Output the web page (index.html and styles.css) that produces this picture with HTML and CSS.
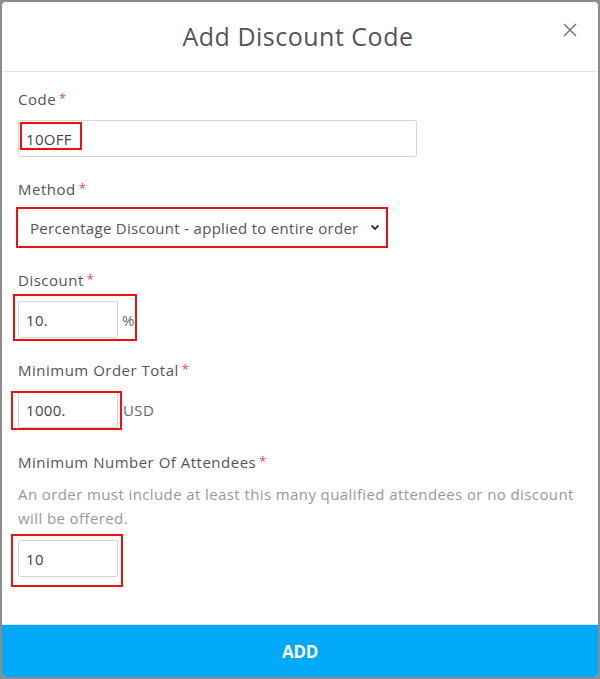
FILE: index.html
```html
<!DOCTYPE html>
<html lang="en">
<head>
<meta charset="utf-8">
<title>Add Discount Code</title>
<link rel="stylesheet" href="styles.css">
</head>
<body>
<div class="modal">
  <header class="modal-header">
    <h1 class="modal-title">Add Discount Code</h1>
    <button class="close" aria-label="Close">
      <svg width="14" height="14" viewBox="0 0 14 14"><path d="M1 1L13 13M13 1L1 13" stroke="#7a7a7a" stroke-width="1.6" fill="none"/></svg>
    </button>
  </header>
  <div class="modal-body">
    <div class="field">
      <label class="label">Code<span class="req">*</span></label>
      <div class="control rel">
        <input class="input input-wide" type="text" value="10OFF">
        <span class="mark mark-code"></span>
      </div>
    </div>
    <div class="field">
      <label class="label">Method<span class="req">*</span></label>
      <div class="control flex">
        <span class="mark-wrap">
          <span class="select">
            <span class="select-text">Percentage Discount - applied to entire order</span>
            <svg class="chev" width="10" height="7" viewBox="0 0 10 7"><path d="M1.5 1.5L5 5L8.5 1.5" stroke="#333" stroke-width="1.8" fill="none"/></svg>
          </span>
        </span>
      </div>
    </div>
    <div class="field">
      <label class="label">Discount<span class="req">*</span></label>
      <div class="control row rel">
        <input class="input input-small" type="text" value="10.">
        <span class="unit">%</span>
        <span class="mark mark-discount"></span>
      </div>
    </div>
    <div class="field field-total">
      <label class="label">Minimum Order Total<span class="req">*</span></label>
      <div class="control row rel">
        <input class="input input-small" type="text" value="1000.">
        <span class="unit unit-usd">USD</span>
        <span class="mark mark-total"></span>
      </div>
    </div>
    <div class="field">
      <label class="label">Minimum Number Of Attendees<span class="req">*</span></label>
      <p class="help">An order must include at least this many qualified attendees or no discount will be offered.</p>
      <div class="control rel">
        <input class="input input-small" type="text" value="10">
        <span class="mark mark-att"></span>
      </div>
    </div>
  </div>
  <footer class="modal-footer">
    <button class="add">ADD</button>
  </footer>
</div>
</body>
</html>
```
FILE: styles.css
```css
* { box-sizing: border-box; }
html, body { margin: 0; padding: 0; }
body {
  background: #8c8c8c;
  font-family: "Open Sans", "Lato", sans-serif;
  color: #555;
  padding: 2px;
  width: 600px;
  height: 679px;
}
.modal {
  background: #fff;
  width: 596px;
  height: 675px;
  border-radius: 4px;
  overflow: hidden;
  display: flex;
  flex-direction: column;
}
.modal-header {
  position: relative;
  height: 70px;
  border-bottom: 1px solid #e2e2e2;
  display: flex;
  align-items: center;
  justify-content: center;
  flex-shrink: 0;
}
.modal-title {
  margin: 0;
  font-weight: 400;
  font-size: 25px;
  letter-spacing: 0.5px;
  color: #555;
  padding-bottom: 1px;
  padding-right: 4px;
}
.close {
  position: absolute;
  right: 21px;
  top: 21px;
  background: none;
  border: 0;
  padding: 0;
  width: 14px;
  height: 14px;
  display: block;
}
.close svg { display: block; }
.modal-body {
  flex: 1;
  padding: 15px 16px 0 16px;
}
.field { margin-bottom: 20px; }
.field-total { margin-bottom: 22px; }
.label {
  display: block;
  font-size: 15px;
  line-height: 22px;
  letter-spacing: 0.5px;
  color: #555;
}
.req {
  color: #e8474a;
  font-size: 13px;
  margin-left: 3px;
  vertical-align: 2px;
}
.control { margin-top: 10px; }
.flex { display: flex; }
.rel { position: relative; }
.row { display: flex; align-items: center; }
.input {
  font-family: inherit;
  font-size: 15px;
  letter-spacing: 0.3px;
  color: #444;
  height: 37px;
  border: 1px solid #d6d6d6;
  border-radius: 2px;
  padding: 0 7px;
  background: #fff;
  outline: none;
  display: block;
}
.input-wide { width: 399px; }
.input-small { width: 100px; }
.unit { font-size: 15px; color: #666; margin-left: 4px; letter-spacing: 0.4px; }
.unit-usd { margin-left: 5px; }
.help {
  margin: 9px 0 0 0;
  font-size: 15px;
  line-height: 24px;
  letter-spacing: 0.4px;
  color: #999;
}
.mark {
  position: absolute;
  border: 2px solid #ee1111;
  pointer-events: none;
}
.mark-code { left: 2px; top: 2px; width: 62px; height: 28px; }
.mark-discount { left: -5px; top: -7px; width: 124px; height: 47px; }
.mark-total { left: -7px; top: 0px; width: 111px; height: 39px; }
.mark-att { left: -7px; top: -6px; width: 112px; height: 53px; }
.mark-wrap {
  display: block;
  border: 2px solid #ee1111;
  margin-left: -2px;
  margin-top: -3px;
}
.select {
  display: flex;
  align-items: center;
  width: 368px;
  height: 37px;
  padding: 0 6px 0 12px;
  font-size: 15px;
  letter-spacing: 0.3px;
  color: #555;
  justify-content: space-between;
}
.chev { display: block; }
.modal-footer {
  border-top: 1px solid #d8e4ee;
  flex-shrink: 0;
}
.add {
  display: block;
  width: 100%;
  height: 52px;
  border: 0;
  margin: 0;
  background: #00a9f9;
  color: #fff;
  font-family: "Open Sans", "Lato", sans-serif;
  font-weight: 700;
  font-size: 17px;
  letter-spacing: -0.3px;
}
```
